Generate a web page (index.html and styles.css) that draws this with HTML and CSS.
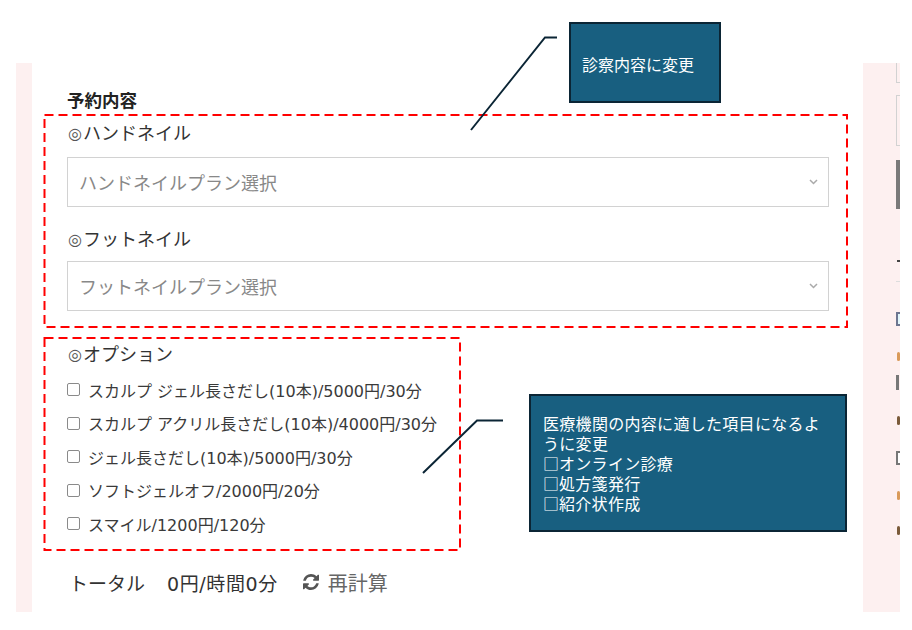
FILE: index.html
```html
<!DOCTYPE html>
<html lang="ja">

<head>
    <meta charset="UTF-8" />
    <meta name="viewport" content="width=device-width, initial-scale=1.0" />
    <title>予約内容</title>
    <link rel="stylesheet" href="styles.css">
</head>

<body>
    <div class="page">
        <div class="frame">
            <main class="card">
                <h2 class="heading">予約内容</h2>

                <p class="label first"><span class="mark">◎</span>ハンドネイル</p>
                <div class="select">
                    <span>ハンドネイルプラン選択</span>
                    <svg class="chevron" width="9" height="6" viewBox="0 0 9 6"><polyline points="1,1 4.5,4.5 8,1" /></svg>
                </div>

                <p class="label foot"><span class="mark">◎</span>フットネイル</p>
                <div class="select">
                    <span>フットネイルプラン選択</span>
                    <svg class="chevron" width="9" height="6" viewBox="0 0 9 6"><polyline points="1,1 4.5,4.5 8,1" /></svg>
                </div>

                <p class="label option"><span class="mark">◎</span>オプション</p>
                <ul class="options">
                    <li><span class="box"></span>スカルプ ジェル長さだし(10本)/5000円/30分</li>
                    <li><span class="box"></span>スカルプ アクリル長さだし(10本)/4000円/30分</li>
                    <li><span class="box"></span>ジェル長さだし(10本)/5000円/30分</li>
                    <li><span class="box"></span>ソフトジェルオフ/2000円/20分</li>
                    <li><span class="box"></span>スマイル/1200円/120分</li>
                </ul>

                <div class="total">
                    <span>トータル</span>
                    <span class="sum">0円/時間0分</span>
                    <span class="recalc">
                        <svg width="16" height="16" viewBox="0 0 1536 1536"><path d="M1511 928q0 5-1 7-64 268-268 434.5T764 1536q-146 0-282.5-55T238 1324l-129 129q-19 19-45 19t-45-19-19-45V960q0-26 19-45t45-19h448q26 0 45 19t19 45-19 45l-137 137q71 66 161 102t187 36q134 0 250-65t186-179q11-17 53-117 8-23 30-23h192q13 0 22.5 9.5t9.5 22.5zm25-800v448q0 26-19 45t-45 19h-448q-26 0-45-19t-19-45 19-45l138-138Q969 256 768 256q-134 0-250 65T332 500q-11 17-53 117-8 23-30 23H50q-13 0-22.5-9.5T18 608v-7q65-268 270-434.5T768 0q146 0 284 55.5T1297 212l130-129q19-19 45-19t45 19 19 45z" /></svg>
                        再計算
                    </span>
                </div>
            </main>

            <!-- next column, only its left edge shows -->
            <aside class="side">
                <div class="s-input small"></div>
                <div class="s-input big"></div>
                <div class="s-btn"></div>
                <div class="s-dash"></div>
                <div class="s-line"></div>
                <div class="s-check"></div>
                <div class="s-dot orange"></div>
                <div class="s-bar"></div>
                <div class="s-dot"></div>
                <div class="s-check gray"></div>
                <div class="s-dot orange"></div>
                <div class="s-dot"></div>
            </aside>
        </div>
    </div>

    <!-- annotations -->
    <svg class="marks" width="912" height="630" viewBox="0 0 912 630">
        <rect class="dash" x="44.5" y="115" width="802.5" height="212" />
        <rect class="dash" x="44.5" y="338" width="415.5" height="212" />
        <polyline class="leader" points="557,37.5 545,37.5 471,130" />
        <polyline class="leader" points="503,420.5 477,420.5 423,473" />
    </svg>
    <div class="callout c1">診察内容に変更</div>
    <div class="callout c2">
        医療機関の内容に適した項目になるように変更<br>
        <span class="sq">□</span>オンライン診療<br>
        <span class="sq">□</span>処方箋発行<br>
        <span class="sq">□</span>紹介状作成
    </div>
</body>

</html>
```

FILE: styles.css
```css
:root{
    --pink: #fdf0f0;
    --text: #333;
    --muted: #888;
    --line: #d2d2d2;
    --navy: #185f80;
    --navy-dark: #0b2535;
}

body{
    margin: 0;
    background-color: #fff;
    font-family: "DejaVu Sans", "Noto Sans CJK JP", sans-serif;
    color: var(--text);
    position: relative;
}
.page{
    padding-top: 63px;
}
.frame{
    display: flex;
    margin-left: 16px;
    width: 884px;
    height: 549px;
    background-color: var(--pink);
    overflow: hidden;
}
.card{
    flex: 0 0 831px;
    box-sizing: border-box;
    margin-left: 16px;
    padding-left: 35px;
    background-color: #fff;
}
.heading{
    margin: 26px 0 0;
    font-size: 17.5px;
    line-height: 24px;
    font-weight: bold;
    color: #222;
}
.label{
    margin: 0;
    font-size: 18px;
    line-height: 26px;
}
.label.first{
    margin-top: 8px;
}
.label.foot{
    margin-top: 20px;
}
.label.option{
    margin-top: 31px;
}
.mark{
    font-size: 16px;
    color: #555;
    margin: 0 1px 0 1px;
    vertical-align: 1px;
}
.select{
    display: flex;
    align-items: center;
    justify-content: space-between;
    box-sizing: border-box;
    width: 762px;
    height: 50px;
    padding: 0 10px 0 11px;
    border: 1px solid var(--line);
    font-size: 18px;
    color: var(--muted);
}
.label.first + .select{
    margin-top: 10px;
}
.label.foot + .select{
    margin-top: 8px;
}
.chevron polyline{
    fill: none;
    stroke: #aaa;
    stroke-width: 1.5;
}
.options{
    list-style: none;
    margin: 5px 0 0;
    padding: 0;
}
.options li{
    display: flex;
    align-items: center;
    height: 33.5px;
    font-size: 16px;
    color: #3a3a3a;
}
.box{
    box-sizing: border-box;
    width: 13px;
    height: 13px;
    margin-right: 8px;
    border: 1px solid #8a8a8a;
    border-radius: 2px;
    background-color: #fff;
}
.total{
    display: flex;
    align-items: center;
    margin-top: 27.5px;
    height: 28px;
    padding-left: 2px;
    font-size: 19px;
}
.sum{
    margin-left: 22px;
    letter-spacing: 0.6px;
}
.recalc{
    display: flex;
    align-items: center;
    gap: 9px;
    margin-left: 25px;
    font-size: 20px;
    color: #666;
}
.recalc svg{
    fill: #555;
}

/* second column, mostly cut off */
.side{
    flex: 0 0 200px;
    margin-left: 33px;
}
.s-input{
    box-sizing: border-box;
    border: 1px solid var(--line);
}
.s-input.small{
    height: 20px;
    border-top: none;
}
.s-input.big{
    height: 51px;
    margin-top: 12px;
}
.s-btn{
    height: 49px;
    margin-top: 14px;
    background-color: #7a7a7a;
}
.s-dash{
    width: 6px;
    height: 2px;
    margin: 51px 0 0 1px;
    background-color: #444;
}
.s-line{
    margin-top: 19px;
    border-top: 1px solid #ddd;
}
.s-check{
    width: 14px;
    height: 14px;
    margin-top: 30px;
    box-sizing: border-box;
    border: 2px solid #6d7690;
    background-color: #e2f6fb;
}
.s-check.gray{
    margin-top: 26px;
    border-color: #777;
    background-color: #fff;
}
.s-dot{
    width: 3px;
    height: 9px;
    margin: 26px 0 0 1px;
    border-radius: 2px;
    background-color: #7a5a3a;
}
.s-dot.orange{
    background-color: #d99a5a;
}
.s-bar{
    width: 3px;
    height: 15px;
    margin-top: 14px;
    background-color: #777;
}

/* annotations over the page */
.marks{
    position: absolute;
    top: 0;
    left: 0;
    pointer-events: none;
}
.dash{
    fill: none;
    stroke: #ff0000;
    stroke-width: 2;
    stroke-dasharray: 9 5;
}
.leader{
    fill: none;
    stroke: var(--navy-dark);
    stroke-width: 2;
}
.callout{
    position: absolute;
    box-sizing: border-box;
    border: 2px solid var(--navy-dark);
    background-color: var(--navy);
    color: #fff;
    font-family: "Noto Sans CJK JP", sans-serif;
    font-size: 16px;
    line-height: 20px;
}
.c1{
    left: 569px;
    top: 22px;
    width: 152px;
    height: 81px;
    padding: 30px 0 0 11px;
}
.c2{
    left: 529px;
    top: 394px;
    width: 318px;
    height: 138px;
    padding: 17px 18px 0 12px;
    letter-spacing: 0.3px;
}
.sq{
    display: inline-block;
    width: 16px;
    letter-spacing: 0;
}
```
